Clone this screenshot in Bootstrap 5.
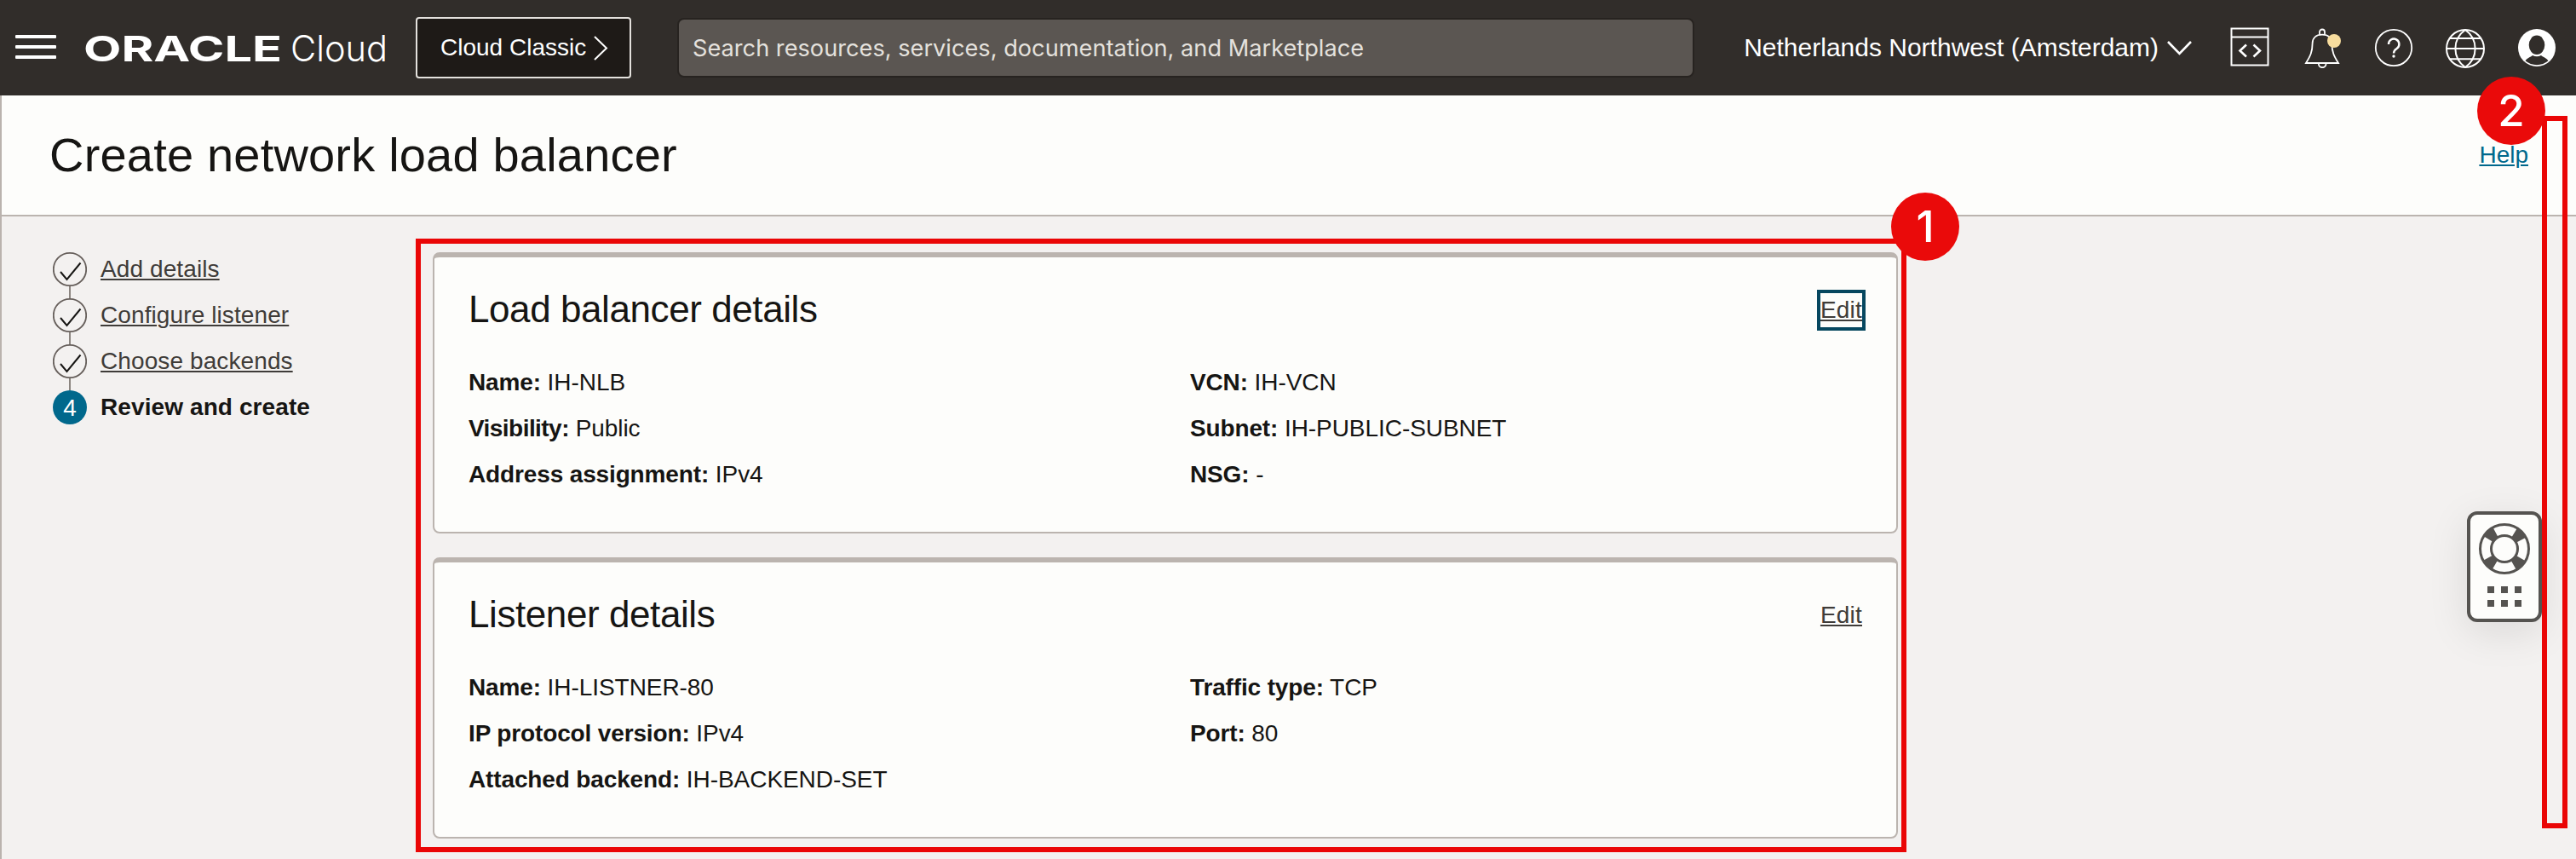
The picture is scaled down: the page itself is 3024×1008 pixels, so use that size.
<!DOCTYPE html>
<html lang="en">
<head>
    <meta charset="UTF-8">
    <meta name="viewport" content="width=device-width, initial-scale=1.0">
    <title>Create network load balancer</title>
    <link href="https://cdn.jsdelivr.net/npm/bootstrap@5.3.0/dist/css/bootstrap.min.css" rel="stylesheet">
    <style>
        body {
            font-family: "Liberation Sans", Arial, sans-serif;
            font-size: 28px;
            line-height: 54px;
            color: #161513;
            background: #f3f1f0;
            height: 1008px;
            overflow: hidden;
        }

        /* top bar */
        .topbar { height: 112px; padding: 0 22px 0 18px; background: #312d2a; color: #fff; }
        .topbar svg { flex: none; }
        .brand { margin: 0 30px 0 28px; }
        .btn-classic {
            width: 253px;
            height: 72px;
            padding: 0 0 0 27px;
            font-size: 28px;
            line-height: 1;
            color: #fff;
            background: #1e1a17;
            border: 2px solid #e4e1dd;
            border-radius: 4px;
        }
        .search-box {
            width: 1194px;
            height: 70px;
            margin-left: 54px;
            padding: 0 16px;
            font-family: Inter, "Liberation Sans", sans-serif;
            font-size: 27.2px;
            line-height: 66px;
            color: #e4e1dd;
            background: #5b5652;
            border: 2px solid #272320;
            border-radius: 8px;
        }
        .search-box::placeholder { color: #e4e1dd; opacity: 1; }
        .region { font-size: 30px; gap: 10px; margin-right: 45px; }
        .tools { gap: 36px; }

        /* page title */
        .page-wrap { height: 896px; border-left: 2px solid #bab3ae; }
        .page-head { height: 142px; padding: 0 56px 0 56px; background: #fdfdfb; border-bottom: 2px solid #bbb4af; }
        .page-head h1 { font-size: 56px; line-height: 1; letter-spacing: .19px; }
        .page-head a { color: #00688c; }
        a { text-decoration-thickness: 2px; text-underline-offset: 2px; }

        /* wizard steps */
        .steps { width: 486px; padding: 35px 0 0 60px; }
        .step { height: 54px; gap: 16px; letter-spacing: .1px; }
        .step a { color: #3f3c39; }
        .step-mark { width: 40px; height: 54px; flex: none; }

        /* review cards */
        .callout { width: 1750px; height: 720px; margin-top: 26px; padding: 10px 4px 0 14px; border: 6px solid #ea0606; }
        .review { height: 330px; padding: 34px 40px 0; background: #fdfdfb; border: 2px solid #bbb4af; border-top-width: 6px; border-radius: 8px; }
        .review + .review { margin-top: 28px; }
        .review h2 { font-size: 44px; line-height: 54px; letter-spacing: -.42px; }
        .review a { color: #3f3c39; line-height: 40px; height: 40px; letter-spacing: .2px; }
        .review a.is-focused { outline: 4px solid #06475f; }
        .facts { display: grid; grid-template-columns: 847px 1fr; margin-top: 32px; letter-spacing: -.06px; }
        .facts p { margin: 0; }
        .facts b { letter-spacing: -.14px; }
        .facts .tight { letter-spacing: -.55px; }

        /* numbered markers and floating help, drawn over the page */
        .num {
            position: absolute;
            width: 80px;
            height: 80px;
            border-radius: 50%;
            background: #ea0a0a;
            color: #fff;
            font: 500 51px/80px Inter, "Liberation Sans", sans-serif;
            text-align: center;
        }
        .num-1 { left: 1726px; top: -60px; }
        .num-2 { left: 2908px; top: 90px; }
        .scroll-callout { position: absolute; left: 2984px; top: 136px; width: 30px; height: 836px; border: 6px solid #ea0606; }
        .help-widget {
            position: absolute;
            left: 2896px;
            top: 600px;
            width: 88px;
            height: 130px;
            background: #fdfdfb;
            border: 4px solid #555350;
            border-radius: 12px;
            box-shadow: 0 12px 48px rgba(22, 21, 19, .1);
        }
    </style>
</head>
<body class="position-relative">
    <header class="topbar d-flex align-items-center">
        <svg width="48" height="30" fill="#fff">
            <rect y="0" width="48" height="4" rx="1"/>
            <rect y="12" width="48" height="4" rx="1"/>
            <rect y="24" width="48" height="4" rx="1"/>
        </svg>
        <svg class="brand" width="364" height="72" fill="#fff">
            <text x="4" y="52" font-family="Inter" font-weight="700" font-size="41" textLength="233" lengthAdjust="spacingAndGlyphs">ORACLE</text>
            <text x="247" y="52" font-family="Inter" font-weight="300" font-size="42" textLength="114" lengthAdjust="spacingAndGlyphs">Cloud</text>
        </svg>
        <button class="btn btn-classic d-flex align-items-center" type="button">
            Cloud Classic
            <svg class="ms-2" width="18" height="30" fill="none" stroke="#fff" stroke-width="2"><path d="M2 2 16 15.500 2 29"/></svg>
        </button>
        <input class="search-box" type="text" placeholder="Search resources, services, documentation, and Marketplace">
        <div class="region d-flex align-items-center ms-auto">
            <span>Netherlands Northwest (Amsterdam)</span>
            <svg width="29" height="20" fill="none" stroke="#fff" stroke-width="2.600"><path d="M1 3 14.500 17 28 3"/></svg>
        </div>
        <div class="tools d-flex">
            <svg width="48" height="48" fill="none" stroke="#fff" stroke-width="2">
                <rect x="1.500" y="1.500" width="43" height="43"/>
                <path d="M1.500 11.500h43"/>
                <path d="M19 20.500 11.500 27.500 19 34.500M27.500 20.500 35 27.500 27.500 34.500" stroke-width="2.600"/>
            </svg>
            <svg width="48" height="48" fill="none" stroke="#fff" stroke-width="1.800">
                <path d="M21 8.500V5.500a3 3 0 0 1 6 0V8.500"/>
                <path d="M24 8.600C16.500 8.600 12.600 13 12.600 19 12.600 29 10 34 5 42H43C38 34 35.400 29 35.400 19 35.400 13 31.500 8.600 24 8.600Z"/>
                <path d="M19.800 42.500a4.400 4.700 0 0 0 8.800 0"/>
                <circle cx="38" cy="16" r="8" fill="#f8dd9e" stroke="none"/>
            </svg>
            <svg width="48" height="48" fill="none" stroke="#fff" stroke-width="1.800">
                <circle cx="24" cy="24" r="21.200"/>
                <path d="M18 20a6.200 6.200 0 1 1 9.600 5C25 26.600 24 27.600 24 30.500" stroke-width="2.400"/>
                <circle cx="24" cy="34" r="1.700" fill="#fff" stroke="none"/>
            </svg>
            <svg width="48" height="48" fill="none" stroke="#fff" stroke-width="2">
                <circle cx="24" cy="25" r="22"/>
                <path d="M2 25h44M6 13h36M6 37.200h36"/>
                <path d="M24 3C8.500 14 8.500 36 24 47M24 3C39.500 14 39.500 36 24 47"/>
            </svg>
            <svg width="48" height="48">
                <circle cx="24" cy="24" r="22" fill="#fff"/>
                <ellipse cx="24" cy="20.800" rx="9.300" ry="11.200" fill="#312d2a"/>
                <path d="M10.500 39.300C12.500 36 16.500 35.200 19 33Q24 35.600 29 33C31.500 35.200 35.500 36 37.500 39.300A21 21 0 0 1 10.500 39.300Z" fill="#312d2a"/>
            </svg>
        </div>
    </header>

    <div class="page-wrap">
        <div class="page-head d-flex align-items-center justify-content-between">
            <h1 class="fw-normal mb-0">Create network load balancer</h1>
            <a href="#">Help</a>
        </div>

        <div class="d-flex align-items-start">
            <nav class="steps">
                <div class="step d-flex">
                    <svg class="step-mark" fill="none">
                        <path d="M20 47v7" stroke="#8b8580" stroke-width="2"/>
                        <circle cx="20" cy="27" r="19.200" stroke="#665f5b" stroke-width="1.800"/>
                        <path d="M9 30 16.500 39 32.500 19.500" stroke="#161513" stroke-width="2"/>
                    </svg>
                    <a href="#">Add details</a>
                </div>
                <div class="step d-flex">
                    <svg class="step-mark" fill="none">
                        <path d="M20 0v7M20 47v7" stroke="#8b8580" stroke-width="2"/>
                        <circle cx="20" cy="27" r="19.200" stroke="#665f5b" stroke-width="1.800"/>
                        <path d="M9 30 16.500 39 32.500 19.500" stroke="#161513" stroke-width="2"/>
                    </svg>
                    <a href="#">Configure listener</a>
                </div>
                <div class="step d-flex">
                    <svg class="step-mark" fill="none">
                        <path d="M20 0v7M20 47v7" stroke="#8b8580" stroke-width="2"/>
                        <circle cx="20" cy="27" r="19.200" stroke="#665f5b" stroke-width="1.800"/>
                        <path d="M9 30 16.500 39 32.500 19.500" stroke="#161513" stroke-width="2"/>
                    </svg>
                    <a href="#">Choose backends</a>
                </div>
                <div class="step d-flex fw-bold">
                    <svg class="step-mark">
                        <path d="M20 0v7" stroke="#8b8580" stroke-width="2"/>
                        <circle cx="20" cy="27" r="20" fill="#00688c"/>
                        <text x="20" y="37" fill="#fff" font-size="28" font-weight="400" text-anchor="middle">4</text>
                    </svg>
                    <span>Review and create</span>
                </div>
            </nav>

            <main class="callout position-relative">
                <section class="review">
                    <div class="d-flex justify-content-between align-items-start">
                        <h2 class="fw-normal mb-0">Load balancer details</h2>
                        <a class="is-focused mt-2" href="#">Edit</a>
                    </div>
                    <div class="facts">
                        <div>
                            <p><b>Name:</b> IH-NLB</p>
                            <p><b class="tight">Visibility:</b> Public</p>
                            <p><b>Address assignment:</b> IPv4</p>
                        </div>
                        <div>
                            <p><b>VCN:</b> IH-VCN</p>
                            <p><b>Subnet:</b> IH-PUBLIC-SUBNET</p>
                            <p><b>NSG:</b> -</p>
                        </div>
                    </div>
                </section>
                <section class="review">
                    <div class="d-flex justify-content-between align-items-start">
                        <h2 class="fw-normal mb-0">Listener details</h2>
                        <a class="mt-2" href="#">Edit</a>
                    </div>
                    <div class="facts">
                        <div>
                            <p><b>Name:</b> IH-LISTNER-80</p>
                            <p><b>IP protocol version:</b> IPv4</p>
                            <p><b>Attached backend:</b> IH-BACKEND-SET</p>
                        </div>
                        <div>
                            <p><b>Traffic type:</b> TCP</p>
                            <p><b>Port:</b> 80</p>
                        </div>
                    </div>
                </section>
                <span class="num num-1">1</span>
            </main>
        </div>
    </div>

    <div class="help-widget">
        <svg class="d-block" width="80" height="122">
            <circle cx="40" cy="40" r="22.500" fill="none" stroke="#555350" stroke-width="13" stroke-dasharray="11.800 23.543" stroke-dashoffset="-11.771"/>
            <circle cx="40" cy="40" r="28.500" fill="none" stroke="#555350" stroke-width="3"/>
            <circle cx="40" cy="40" r="15.500" fill="none" stroke="#555350" stroke-width="3"/>
            <path d="M20 84h8v8h-8zM36 84h8v8h-8zM52 84h8v8h-8zM20 100h8v8h-8zM36 100h8v8h-8zM52 100h8v8h-8z" fill="#555350"/>
        </svg>
    </div>
    <div class="scroll-callout"></div>
    <span class="num num-2">2</span>

    <script src="https://cdn.jsdelivr.net/npm/bootstrap@5.3.0/dist/js/bootstrap.bundle.min.js"></script>
</body>
</html>
